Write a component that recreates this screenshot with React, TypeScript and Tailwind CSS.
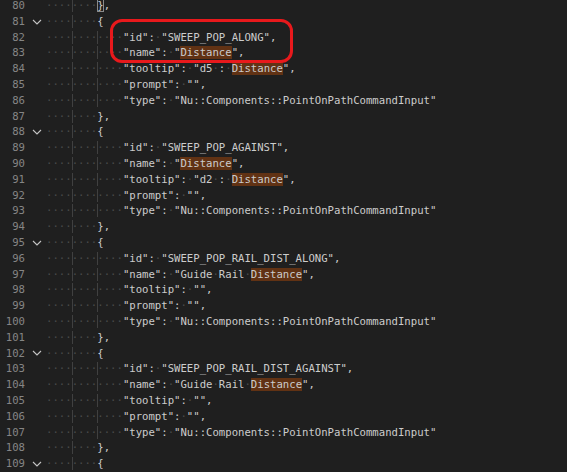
import React from "react";

interface Line {
  n: number;
  indent: number;
  text: string;
  fold?: boolean;
}

const prompt = '"prompt": "",';
const type = '"type": "Nu::Components::PointOnPathCommandInput"';

const lines: Line[] = [
  { n: 80, indent: 8, text: "}," },
  { n: 81, indent: 8, text: "{", fold: true },
  { n: 82, indent: 12, text: '"id": "SWEEP_POP_ALONG",' },
  { n: 83, indent: 12, text: '"name": "Distance",' },
  { n: 84, indent: 12, text: '"tooltip": "d5 : Distance",' },
  { n: 85, indent: 12, text: prompt },
  { n: 86, indent: 12, text: type },
  { n: 87, indent: 8, text: "}," },
  { n: 88, indent: 8, text: "{", fold: true },
  { n: 89, indent: 12, text: '"id": "SWEEP_POP_AGAINST",' },
  { n: 90, indent: 12, text: '"name": "Distance",' },
  { n: 91, indent: 12, text: '"tooltip": "d2 : Distance",' },
  { n: 92, indent: 12, text: prompt },
  { n: 93, indent: 12, text: type },
  { n: 94, indent: 8, text: "}," },
  { n: 95, indent: 8, text: "{", fold: true },
  { n: 96, indent: 12, text: '"id": "SWEEP_POP_RAIL_DIST_ALONG",' },
  { n: 97, indent: 12, text: '"name": "Guide Rail Distance",' },
  { n: 98, indent: 12, text: '"tooltip": "",' },
  { n: 99, indent: 12, text: prompt },
  { n: 100, indent: 12, text: type },
  { n: 101, indent: 8, text: "}," },
  { n: 102, indent: 8, text: "{", fold: true },
  { n: 103, indent: 12, text: '"id": "SWEEP_POP_RAIL_DIST_AGAINST",' },
  { n: 104, indent: 12, text: '"name": "Guide Rail Distance",' },
  { n: 105, indent: 12, text: '"tooltip": "",' },
  { n: 106, indent: 12, text: prompt },
  { n: 107, indent: 12, text: type },
  { n: 108, indent: 8, text: "}," },
  { n: 109, indent: 8, text: "{", fold: true },
];

const Chevron = () => (
  <svg width="10" height="6" viewBox="0 0 10 6" className="block">
    <path d="M1 1l4 4 4-4" fill="none" stroke="#c5c5c5" strokeWidth="1.1" />
  </svg>
);

const Dot: React.FC<{ guide?: boolean }> = ({ guide }) => (
  <span
    className={
      guide
        ? "text-[#4a4a4a] shadow-[inset_1px_0_0_#404040]"
        : "text-[#4a4a4a]"
    }
  >
    ·
  </span>
);

const Code: React.FC<{ line: Line }> = ({ line }) => {
  const indent = [];
  for (let i = 0; i < line.indent; i++) {
    indent.push(<Dot key={"i" + i} guide={i === 4 || i === 8} />);
  }
  const parts = line.text.split(/( |Distance)/).filter((p) => p !== "");
  return (
    <span className="whitespace-pre">
      {indent}
      {parts.map((p, i) => {
        if (p === " ") return <Dot key={i} />;
        if (p === "Distance")
          return (
            <span key={i} className="bg-[#613214]">
              {p}
            </span>
          );
        if (line.n === 80 && p === "},")
          return (
            <span key={i}>
              <span className="shadow-[inset_0_0_0_1px_#8a8a8a]">{"}"}</span>,
            </span>
          );
        return <span key={i}>{p}</span>;
      })}
    </span>
  );
};

export default function App() {
  return (
    <div className="relative w-[567px] h-[472px] overflow-hidden bg-[#1f1f1f] font-['DejaVu_Sans_Mono',monospace] text-[10.63px] leading-[15.8px] text-[#cccccc]">
      <div className="flex flex-col -mt-[2px]">
        {lines.map((line) => (
          <div key={line.n} className="flex h-[15.8px] items-center">
            <div className="w-[25px] text-right text-[#858585]">{line.n}</div>
            <div className="w-[21px] flex justify-center pl-[2px]">
              {line.fold && <Chevron />}
            </div>
            <Code line={line} />
          </div>
        ))}
      </div>
      <div className="absolute left-[110px] top-[19px] w-[183px] h-[44px] border-[3px] border-[#e8191c] rounded-[12px]" />
    </div>
  );
}
